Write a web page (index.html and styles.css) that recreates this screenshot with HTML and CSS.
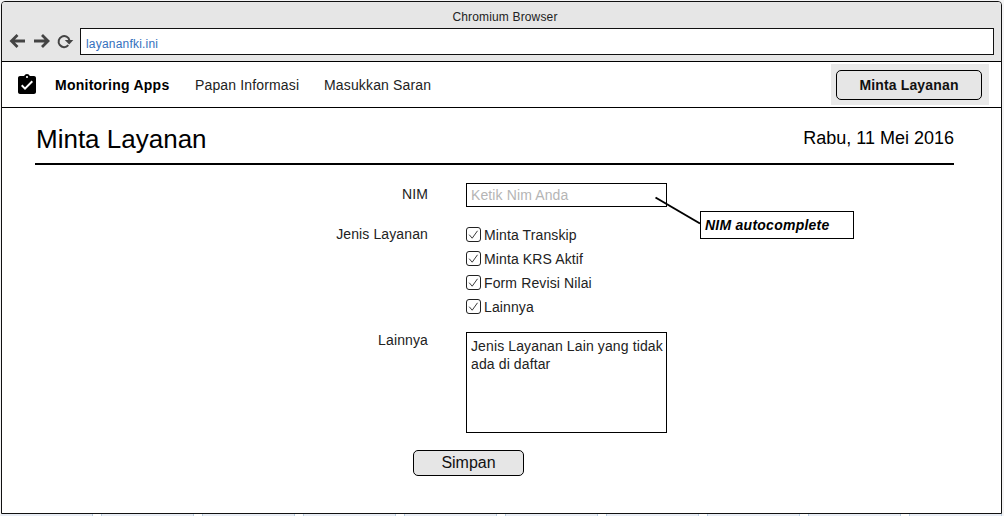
FILE: index.html
```html
<!DOCTYPE html>
<html lang="id">
<head>
<meta charset="utf-8">
<title>Minta Layanan</title>
<link rel="stylesheet" href="styles.css">
</head>
<body>
<div class="window">
  <header class="chrome">
    <div class="chrome-title">Chromium Browser</div>
    <div class="toolbar">
      <svg class="controls" width="66" height="20" viewBox="0 0 66 20" fill="none" stroke="#444" stroke-width="2.800">
        <path d="M16 10H3M8.500 4L2.500 10L8.500 16"/>
        <path d="M25 10H39M33 4L39 10L33 16"/>
        <path stroke-width="2" d="M59.300 14.200A5.500 5.500 0 1 1 60.500 9.500"/>
        <path fill="#444" stroke="none" d="M55.800 9H64.300L60.200 13.600Z"/>
      </svg>
      <div class="address">layananfki.ini</div>
    </div>
  </header>
  <nav class="nav">
    <svg class="logo" width="18" height="20" viewBox="3 1 18 20"><path d="M19 3h-4.180C14.400 1.840 13.300 1 12 1s-2.400.84-2.820 2H5c-1.100 0-2 .9-2 2v14c0 1.100.9 2 2 2h14c1.100 0 2-.9 2-2V5c0-1.100-.9-2-2-2zm-7 0c.55 0 1 .45 1 1s-.45 1-1 1-1-.45-1-1 .45-1 1-1zm-2 14l-4-4 1.410-1.410L10 14.170l6.590-6.590L18 9l-8 8z"/></svg>
    <a class="brand">Monitoring Apps</a>
    <a class="link info">Papan Informasi</a>
    <a class="link saran">Masukkan Saran</a>
    <div class="cta-wrap"><button class="button cta">Minta Layanan</button></div>
  </nav>
  <main class="main">
    <div class="heading"><h1 class="title">Minta Layanan</h1><span class="date">Rabu, 11 Mei 2016</span></div>
    <form class="form">
      <div class="row row-nim"><label class="label">NIM</label><div class="field input">Ketik Nim Anda
        <svg class="pointer" width="48" height="30" viewBox="0 0 48 30"><path d="M1.500 1.500L46 27.500" stroke="#000" stroke-width="2"/></svg>
        <div class="note">NIM autocomplete</div></div></div>
      <div class="row row-jenis"><label class="label">Jenis Layanan</label>
        <div class="checks">
          <div class="check"><svg class="box" width="15" height="15" viewBox="0 0 15 15"><rect x=".5" y=".5" width="14" height="14" rx="2.500"/><path d="M3.200 7.700L6.200 11.200L11.500 3.800"/></svg>Minta Transkip</div>
          <div class="check"><svg class="box" width="15" height="15" viewBox="0 0 15 15"><rect x=".5" y=".5" width="14" height="14" rx="2.500"/><path d="M3.200 7.700L6.200 11.200L11.500 3.800"/></svg>Minta KRS Aktif</div>
          <div class="check"><svg class="box" width="15" height="15" viewBox="0 0 15 15"><rect x=".5" y=".5" width="14" height="14" rx="2.500"/><path d="M3.200 7.700L6.200 11.200L11.500 3.800"/></svg>Form Revisi Nilai</div>
          <div class="check"><svg class="box" width="15" height="15" viewBox="0 0 15 15"><rect x=".5" y=".5" width="14" height="14" rx="2.500"/><path d="M3.200 7.700L6.200 11.200L11.500 3.800"/></svg>Lainnya</div>
        </div></div>
      <div class="row row-lain"><label class="label">Lainnya</label><div class="field area">Jenis Layanan Lain yang tidak ada di daftar</div></div>
      <button type="button" class="button save">Simpan</button>
    </form>
  </main>
</div>
<div class="ruler"></div>
</body>
</html>
```
FILE: styles.css
```css
* { box-sizing: border-box; }
body { margin: 0; padding: 1px 0 0 1px; height: 516px; overflow: hidden; background: #f3f3f4; color: #222; font: 14px/18px "Liberation Sans", Arial, sans-serif; }
.window { width: 1001px; height: 513px; border: 1px solid #111; border-radius: 4px 4px 0 0; background: #fff; overflow: hidden; }
.chrome { height: 60px; background: #e6e6e6; border-bottom: 1px solid #000; }
.chrome-title { height: 26px; padding: 6px 0 0 7px; text-align: center; font-size: 12px; letter-spacing: .15px; }
.toolbar { display: flex; }
.controls { margin: 3px 0 0 7px; }
.address { margin-left: 5px; width: 914px; height: 27px; border: 1px solid #111; background: #fff; color: #3470bd; font-size: 12px; padding: 6px 5px 0; letter-spacing: .2px; }
.nav { display: flex; height: 46px; border-bottom: 1px solid #000; }
.logo { margin: 12px 0 0 16px; }
.brand { width: 140px; margin-left: 19px; padding-top: 14px; color: #000; font-weight: 700; letter-spacing: .25px; }
.link { padding-top: 14px; letter-spacing: .15px; }
.info { width: 129px; }
.saran { width: 507px; }
.cta-wrap { width: 158px; height: 41px; margin-top: 2px; padding: 6px 0 0 5px; background: #e9e9e9; }
.button { display: block; padding: 0; border: 1px solid #000; border-radius: 5px; background: #e6e6e6; color: #111; font-family: inherit; }
.cta { width: 146px; height: 30px; font-size: 14px; font-weight: 700; letter-spacing: .15px; }
.main { padding: 0 47px 0 33px; }
.heading { display: flex; justify-content: space-between; height: 57px; border-bottom: 2px solid #000; color: #000; }
.title { margin: 16px 0 0 1px; font-size: 26px; line-height: 30px; font-weight: 400; }
.date { font-size: 18px; line-height: 22px; margin-top: 19px; }
.form { padding-top: 18px; }
.row { display: flex; letter-spacing: .12px; }
.label { width: 393px; margin: -1px 38px 0 0; text-align: right; }
.row-nim { height: 44px; }
.row-nim .label { padding-top: 3px; }
.row-jenis { height: 105px; }
.row-jenis .label { margin-top: -2px; }
.field { width: 201px; border: 1px solid #000; padding: 2px 0 0 4px; }
.input { position: relative; height: 24px; color: #b5b5b5; }
.pointer { position: absolute; left: 187px; top: 12px; }
.note { position: absolute; left: 233px; top: 27px; width: 154px; height: 28px; border: 1px solid #000; background: #fff; color: #000; padding: 4px 4px 0; font-weight: 700; font-style: italic; white-space: nowrap; letter-spacing: .25px; }
.check { display: flex; align-items: flex-start; height: 24px; padding-top: 3px; }
.checks { margin-top: -4px; }
.box { margin: 1px 3px 0 0; fill: #fff; stroke: #222; }
.box path { fill: none; stroke-width: .9; }
.area { height: 101px; padding-top: 4px; }
.save { width: 111px; height: 26px; margin: 17px 0 0 378px; font-size: 16px; }
.ruler { height: 2px; width: 1001px; background: repeating-linear-gradient(90deg, #e8edf5 0 91px, #b8cee3 91px 92px, #fff 92px 100px, #b8cee3 100px 101px); }
```
